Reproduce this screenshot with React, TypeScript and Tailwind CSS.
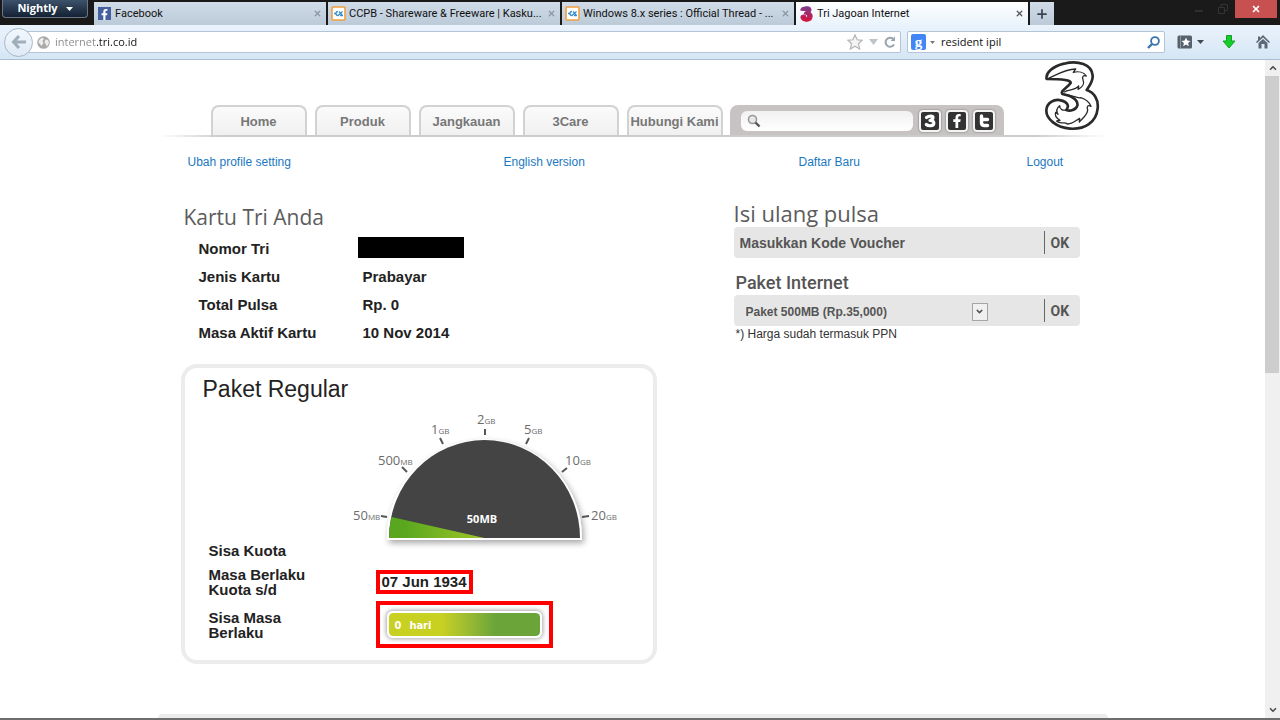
import type { ReactNode } from 'react';
import { FaFacebookF } from 'react-icons/fa';
import { ChevronDown, ChevronUp, Plus, X } from 'lucide-react';

const THREE_OUTLINE =
  'M650 70C646 52 668 32 702 24C744 13 786 26 788 60C789 78 780 88 770 103C792 110 806 132 803 158C799 200 764 222 720 219C680 216 648 190 649 164C650 142 672 129 693 134C712 138 719 151 709 163C720 168 738 163 742 150C745 137 735 123 697 115C690 105 712 97 722 82C724 74 700 70 650 70Z';

const TABS = [
  { title: 'Facebook', icon: <FacebookIcon /> },
  { title: 'CCPB - Shareware & Freeware | Kasku...', icon: <KaskusIcon /> },
  { title: 'Windows 8.x series : Official Thread - ...', icon: <KaskusIcon /> },
  { title: 'Tri Jagoan Internet', icon: <TriIcon />, active: true },
];

const MENU = ['Home', 'Produk', 'Jangkauan', '3Care', 'Hubungi Kami'];

const CARD_ROWS = [
  { label: 'Nomor Tri', value: '' },
  { label: 'Jenis Kartu', value: 'Prabayar' },
  { label: 'Total Pulsa', value: 'Rp. 0' },
  { label: 'Masa Aktif Kartu', value: '10 Nov 2014' },
];

const GAUGE_MARKS = [
  { x: 8, y: 112, value: '50', unit: 'MB', tick: 'M36 108L42 109' },
  { x: 33, y: 57, value: '500', unit: 'MB', tick: 'M57 59L62 64' },
  { x: 86, y: 26, value: '1', unit: 'GB', tick: 'M95 30L98 36' },
  { x: 132, y: 16, value: '2', unit: 'GB', tick: 'M140 21L140 27' },
  { x: 179, y: 26, value: '5', unit: 'GB', tick: 'M184 30L181 36' },
  { x: 220, y: 57, value: '10', unit: 'GB', tick: 'M222 60L217 64' },
  { x: 246, y: 112, value: '20', unit: 'GB', tick: 'M244 108L237 109' },
];

export default function App() {
  return (
    <div className="flex h-screen flex-col overflow-hidden bg-white font-['Liberation_Sans',Arial,sans-serif] text-[#222]">
      <TabStrip />
      <Toolbar />
      <div className="flex min-h-0 flex-1">
        <div className="flex min-w-0 flex-1 flex-col overflow-hidden">
          <div className="mx-auto flex w-full max-w-[950px] flex-1 flex-col">
            <SiteHeader />
            <nav className="mt-4 grid grid-cols-[316px_295px_228px_auto] pl-[30px] text-xs leading-[18px] text-[#1b78c2]">
              <a href="#profile">Ubah profile setting</a>
              <a href="#english">English version</a>
              <a href="#daftar">Daftar Baru</a>
              <a href="#logout">Logout</a>
            </nav>
            <main className="mt-7 grid grid-cols-[476px_346px] items-start gap-[77px] pl-[23px]">
              <div>
                <CardInfo />
                <QuotaPanel />
              </div>
              <TopUp />
            </main>
            <footer className="mt-auto h-1 rounded-t bg-[#ececec]" />
          </div>
        </div>
        <Scrollbar />
      </div>
      <div className="h-0.5 shrink-0 bg-[#6e6e6e]" />
    </div>
  );
}

function TabStrip() {
  return (
    <div className="flex h-[25px] shrink-0 items-start bg-[#1a1a1a] font-['Open_Sans',sans-serif]">
      <button className="ml-0.5 flex h-[18px] w-[86px] items-center justify-center gap-2 rounded-b border border-t-0 border-[#6b7785] bg-linear-to-b from-[#3d526b] to-[#142234] text-[11px] font-bold text-white">
        Nightly
        <Triangle className="h-1 w-[7px] text-white" />
      </button>
      <div className="ml-1.5 flex gap-0.5 self-end">
        {TABS.map((tab) => (
          <div
            key={tab.title}
            className={`flex h-[23px] w-[232px] items-center pr-1 pl-[3px] ${
              tab.active ? 'bg-linear-to-b from-white to-[#eaf3fc]' : 'bg-linear-to-b from-[#d0dce8] to-[#bccad8]'
            }`}
          >
            {tab.icon}
            <button className="ml-[3px] min-w-0 flex-1 text-left font-['Roboto',sans-serif] text-[11px] leading-4 whitespace-nowrap text-[#111]">
              {tab.title}
            </button>
            <button aria-label="Close tab" className={tab.active ? 'text-[#555]' : 'text-[#8c979f]'}>
              <X size={9} strokeWidth={3.5} />
            </button>
          </div>
        ))}
        <button
          aria-label="New tab"
          className="flex h-[23px] w-6 items-center justify-center bg-linear-to-b from-[#d0dce8] to-[#bccad8] text-[#3b4650]"
        >
          <Plus size={14} strokeWidth={3} />
        </button>
      </div>
      <div className="mr-[3px] ml-auto flex h-[18px] items-center text-[#333]">
        <button aria-label="Minimize" className="flex w-6 justify-center">
          <span className="mt-1 h-0.5 w-2 bg-[#2e2e2e]" />
        </button>
        <button aria-label="Restore" className="flex w-6 justify-center">
          <svg width="10" height="10" viewBox="0 0 10 10" fill="none" stroke="#333">
            <path d="M.5 3.5h6v6h-6zM3 3.5V.5h6.500v6H7" />
          </svg>
        </button>
        <button aria-label="Close" className="flex h-[18px] w-[42px] items-center justify-center bg-[#c75050] text-white">
          <X size={10} strokeWidth={4} />
        </button>
      </div>
    </div>
  );
}

function Toolbar() {
  return (
    <div className="flex h-[35px] shrink-0 items-center border-b border-[#a9bdd3] bg-linear-to-b from-[#eaf3fc] to-[#d6e6f5] pr-2.5 pl-1 font-['Open_Sans',sans-serif] text-[11px]">
      <button
        aria-label="Back"
        className="relative z-10 flex size-[29px] items-center justify-center rounded-full border border-[#a8b8c8] bg-linear-to-b from-[#f2f7fc] to-[#dfeaf5]"
      >
        <svg width="16" height="14" viewBox="0 0 16 14" fill="none" stroke="#9faebb" strokeWidth="3">
          <path d="M8 1L2.500 7L8 13M3 7h12" />
        </svg>
      </button>
      <div className="-ml-2 flex h-[22px] flex-1 items-center rounded-xs border border-[#b4c4d4] bg-white pl-[11px]">
        <svg width="13" height="13" viewBox="0 0 13 13">
          <circle cx="6.500" cy="6.500" r="6.300" fill="#a9a9a9" />
          <path d="M2 4L5 1.500L7 3L5.500 5L6.500 7L4.500 10L3 8L1.500 6.500zM8.500 3.500L11 4L12 7L10 10.500L8.500 8L7.500 6z" fill="#ececec" />
        </svg>
        <input
          aria-label="Address"
          defaultValue="internet.tri.co.id"
          className="ml-[5px] min-w-0 flex-1 bg-[linear-gradient(90deg,#8a8a8a_42px,#111_42px)] bg-clip-text text-transparent outline-none"
        />
        <div className="flex items-center gap-1.5 pr-1 text-[#a4adb5]">
          <svg width="16" height="16" viewBox="0 0 16 16" fill="#f4f4f4" stroke="#b4b4b4" strokeWidth="1.200">
            <path d="M8 1L10.200 5.800L15.200 6.300L11.500 9.800L12.600 15L8 12.300L3.400 15L4.500 9.800L.8 6.300L5.800 5.800Z" />
          </svg>
          <Triangle className="h-[6px] w-[9px] text-[#bcc3c9]" />
          <svg width="12" height="12" viewBox="0 0 12 12" fill="none" stroke="#98a4ae" strokeWidth="2">
            <path d="M10 8.500A4.500 4.500 0 1 1 9 2.800" />
            <path d="M11 .5V5H6.500Z" fill="#98a4ae" stroke="none" />
          </svg>
        </div>
      </div>
      <div className="ml-1.5 flex h-[22px] w-[258px] items-center rounded-xs border border-[#b4c4d4] bg-white pr-1 pl-[3px]">
        <span className="flex h-4 w-[15px] items-center justify-center rounded-xs bg-[#4285f4] font-['Liberation_Serif',serif] text-[15px] leading-3 font-bold text-white">
          g
        </span>
        <Triangle className="ml-1 h-[3px] w-[5px] text-[#777]" />
        <input
          aria-label="Search"
          defaultValue="resident ipil"
          className="ml-1.5 min-w-0 flex-1 text-[#111] outline-none"
        />
        <svg width="13" height="13" viewBox="0 0 13 13" fill="none" stroke="#3874b0" strokeWidth="1.800">
          <circle cx="8" cy="5" r="3.900" />
          <path d="M5 8L1 12" strokeWidth="2.400" />
        </svg>
      </div>
      <button aria-label="Bookmarks" className="ml-3 flex items-center gap-1">
        <svg width="16" height="14" viewBox="0 0 16 14">
          <rect x=".5" y=".5" width="14.500" height="13" rx="1.500" fill="#56616d" />
          <path d="M3.500 1v12" stroke="#8b97a3" />
          <path d="M9 2.500L10.300 5.600L13.500 5.900L11.100 8L11.800 11.300L9 9.600L6.200 11.300L6.900 8L4.500 5.900L7.700 5.600Z" fill="#fff" />
        </svg>
        <Triangle className="h-1 w-[7px] text-[#3f4a55]" />
      </button>
      <button aria-label="Downloads" className="ml-[18px]">
        <svg width="14" height="14" viewBox="0 0 14 14" fill="#12cf2a" stroke="#149e24">
          <path d="M4.500 .5h5v5.500h3.500L7 13L1 6h3.500z" />
        </svg>
      </button>
      <button aria-label="Home page" className="ml-5">
        <svg width="14" height="14" viewBox="0 0 14 14" fill="#5c6873">
          <path d="M7 0L14 7L13 8L7 2.500L1 8L0 7L2 5V1.500h2V3z" />
          <path d="M2.500 8L7 4L11.500 8V13.500H8.500V9h-3v4.500h-3z" />
        </svg>
      </button>
    </div>
  );
}

function SiteHeader() {
  return (
    <header className="relative flex h-[77px] items-end pl-[53px]">
      <nav className="flex gap-2">
        {MENU.map((item) => (
          <a
            key={item}
            href="#menu"
            className="flex h-8 w-24 items-center justify-center rounded-t-lg border-2 border-b-0 border-[#d2d2d2] bg-linear-to-b from-[#fbfbfb] to-[#efefef] text-[13px] font-bold whitespace-nowrap text-[#777]"
          >
            {item}
          </a>
        ))}
      </nav>
      <div className="ml-[7px] flex h-8 w-[274px] items-center rounded-t-lg bg-[#c8c3c3] pl-[11px]">
        <label className="flex h-5 w-[172px] items-center rounded-md bg-linear-to-b from-[#f1f1f1] to-white pl-1.5">
          <svg width="14" height="14" viewBox="0 0 14 14" fill="none" stroke="#999" strokeWidth="1.600">
            <circle cx="5.500" cy="5.500" r="4" fill="#e8e8e8" />
            <path d="M8.500 8.500L12.500 12.500" stroke="#555" strokeWidth="2.400" />
          </svg>
          <input aria-label="Cari" className="min-w-0 flex-1 text-xs outline-none" />
        </label>
        <div className="ml-1.5 flex gap-[5px]">
          <SocialLink label="Tri">
            <svg width="12" height="14" viewBox="0 0 12 14" fill="none" stroke="#fff" strokeWidth="3.200" strokeLinecap="round" strokeLinejoin="round">
              <path d="M2.500 3.500C5 1.500 9 1.800 9 3.500C9 5 7.500 6 6 6.500C9 6.500 10 8 9.800 9.500C9.500 12 4.500 12.500 2.300 10.500" />
            </svg>
          </SocialLink>
          <SocialLink label="Facebook">
            <FaFacebookF size={14} />
          </SocialLink>
          <SocialLink label="Twitter">
            <svg width="12" height="14" viewBox="0 0 12 14" fill="none" stroke="#fff" strokeWidth="3.400" strokeLinecap="round">
              <path d="M3.500 2v6.500q0 3 3 3h3M3.500 5.500h6" />
            </svg>
          </SocialLink>
        </div>
      </div>
      <div className="absolute inset-x-0 bottom-0 h-0.5 bg-[linear-gradient(90deg,transparent,#cbcbcb_7%,#cbcbcb_92%,transparent)]" />
      <a href="#tri" aria-label="Tri" className="absolute top-0 right-2">
        <TriLogo />
      </a>
    </header>
  );
}

function CardInfo() {
  return (
    <section>
      <h1 className="pl-[3px] font-['Open_Sans',sans-serif] text-[21px] leading-9 font-medium text-[#5c5c5c]">
        Kartu Tri Anda
      </h1>
      <dl className="pl-[18px] text-[15px] leading-7 font-bold">
        {CARD_ROWS.map((row) => (
          <div key={row.label} className="flex items-start">
            <dt className="w-[159px]">{row.label}</dt>
            {row.value ? (
              <dd className="pl-[5px]">{row.value}</dd>
            ) : (
              <dd className="mt-0.5 h-[21px] w-[106px] bg-black" />
            )}
          </div>
        ))}
      </dl>
    </section>
  );
}

function QuotaPanel() {
  return (
    <section className="mt-[17px] rounded-2xl border-4 border-[#ececec] pt-1 pb-3 pl-6 text-[15px] leading-[15px] font-bold">
      <h2 className="-ml-1.5 text-[23px] leading-[34px] font-normal">Paket Regular</h2>
      <Gauge />
      <p>Sisa Kuota</p>
      <div className="mt-[9px] flex items-center">
        <p className="w-[167px]">
          Masa Berlaku
          <br />
          Kuota s/d
        </p>
        <p className="border-4 border-[#f00] px-0.5 py-px leading-[14px]">07 Jun 1934</p>
      </div>
      <div className="mt-1 flex items-center">
        <p className="w-[167px]">
          Sisa Masa
          <br />
          Berlaku
        </p>
        <div className="border-4 border-[#f00] px-[7px] py-1.5">
          <div className="flex h-[27px] w-[155px] items-center gap-2 rounded-md border-2 border-white bg-linear-to-r from-[#c8d022] from-35% to-[#6ba539] to-70% bg-clip-padding pt-0.5 pl-1.5 font-['DejaVu_Sans_Condensed','DejaVu_Sans',sans-serif] text-[11px] text-white shadow-[0_0_4px_1px_rgba(0,0,0,0.35)]">
            <span>0</span>
            <span>hari</span>
          </div>
        </div>
      </div>
    </section>
  );
}

function Gauge() {
  return (
    <svg
      width="280"
      height="135"
      viewBox="0 0 280 135"
      className="mt-0.5 ml-[136px] overflow-visible font-['Open_Sans',sans-serif] font-normal"
    >
      <defs>
        <linearGradient id="used" x1="0" x2="1">
          <stop offset="0.15" stopColor="#58a71f" />
          <stop offset="1" stopColor="#a0c626" />
        </linearGradient>
        <filter id="soft" x="-10%" y="-10%" width="125%" height="130%">
          <feDropShadow dx="2" dy="3" stdDeviation="3" floodOpacity="0.35" />
        </filter>
      </defs>
      <path d="M42 132V130A97.500 98.500 0 0 1 237 130V132Z" fill="#fff" filter="url(#soft)" />
      <path d="M44 130A95.500 98 0 0 1 235 130Z" fill="#444" />
      <path d="M44 130Q44 119 46.500 109L139.500 130Z" fill="url(#used)" />
      {GAUGE_MARKS.map((mark) => (
        <g key={mark.value + mark.unit}>
          <path d={mark.tick} stroke="#555" strokeWidth="2" />
          <text x={mark.x} y={mark.y} fill="#6c6c6c" fontSize="13">
            {mark.value}
            <tspan fontSize="8">{mark.unit}</tspan>
          </text>
        </g>
      ))}
      <text x="137" y="115" fill="#fff" fontSize="11" fontWeight="700" textAnchor="middle">
        50MB
      </text>
    </svg>
  );
}

function TopUp() {
  return (
    <section className="font-bold text-[#555]">
      <h2 className="font-['Open_Sans',sans-serif] text-[22px] leading-7 font-medium text-[#5c5c5c]">
        Isi ulang pulsa
      </h2>
      <form className="flex h-[31px] items-center rounded bg-[#e6e6e6]" onSubmit={(e) => e.preventDefault()}>
        <input
          aria-label="Kode voucher"
          defaultValue="Masukkan Kode Voucher"
          className="min-w-0 flex-1 pl-1.5 text-sm outline-none"
        />
        <OkButton />
      </form>
      <h3 className="mt-3 pl-0.5 font-['Roboto',sans-serif] text-[18px] leading-[25px] font-medium">Paket Internet</h3>
      <form className="flex h-[31px] items-center rounded bg-[#e6e6e6]" onSubmit={(e) => e.preventDefault()}>
        <div className="relative mt-0.5 ml-3 flex w-[242px]">
          <select aria-label="Paket Internet" className="w-full appearance-none text-xs leading-[18px] outline-none">
            <option>Paket 500MB (Rp.35,000)</option>
          </select>
          <span className="pointer-events-none absolute top-0 right-0 flex h-[18px] w-4 items-center justify-center border border-[#a5a5a5] bg-[#f0f0f0]">
            <ChevronDown size={9} strokeWidth={4} />
          </span>
        </div>
        <span className="flex-1" />
        <OkButton />
      </form>
      <p className="pl-0.5 text-xs leading-4 font-normal text-[#333]">*) Harga sudah termasuk PPN</p>
    </section>
  );
}

function OkButton() {
  return (
    <button className="h-[23px] w-9 shrink-0 border-l border-[#666] pl-1.5 text-left font-['Roboto',sans-serif] text-sm font-bold">
      OK
    </button>
  );
}

function Scrollbar() {
  return (
    <div className="flex w-[15px] shrink-0 flex-col bg-[#f0f0f0] text-[#505050]">
      <button aria-label="Scroll up" className="flex h-4 items-center justify-center">
        <ChevronUp size={10} strokeWidth={4} />
      </button>
      <div className="flex-1 pr-px">
        <div className="h-[47.5%] bg-[#cdcdcd]" />
      </div>
      <button aria-label="Scroll down" className="flex h-4 items-center justify-center">
        <ChevronDown size={10} strokeWidth={4} />
      </button>
    </div>
  );
}

function SocialLink({ label, children }: { label: string; children: ReactNode }) {
  return (
    <a
      href="#social"
      aria-label={label}
      className="flex size-[22px] items-center justify-center rounded border-2 border-[#f4f4f4] bg-[#333] text-white shadow-[0_0_2px_rgba(0,0,0,0.5)]"
    >
      {children}
    </a>
  );
}

function Triangle({ className }: { className: string }) {
  return (
    <svg viewBox="0 0 8 5" preserveAspectRatio="none" className={className}>
      <path d="M0 0h8L4 5z" fill="currentColor" />
    </svg>
  );
}

function TriLogo() {
  return (
    <svg width="56" height="71" viewBox="642 13 168 213" fill="none" stroke="#2a2a2a" strokeWidth="8" strokeLinejoin="round">
      <path d={THREE_OUTLINE} fill="#fff" />
      <path
        strokeWidth="4"
        d="M655 68C682 56 706 41 737 40L730 50C746 46 762 50 769 61C760 58 755 63 759 72C764 84 757 95 744 101L746 91C733 106 716 99 702 110M700 116C728 118 746 129 752 126C766 130 778 140 783 152C774 147 769 152 773 163C773 176 762 184 748 199L749 188C735 196 726 206 712 205C705 196 690 208 680 196L690 194C676 186 674 178 677 170L684 176C677 164 681 156 689 150C689 162 699 165 709 163"
      />
    </svg>
  );
}

function TriIcon() {
  return (
    <svg width="15" height="16" viewBox="638 10 176 220">
      <defs>
        <linearGradient id="tri" x2="0" y2="1">
          <stop stopColor="#7b3a8c" />
          <stop offset="1" stopColor="#d8123c" />
        </linearGradient>
      </defs>
      <path d={THREE_OUTLINE} fill="url(#tri)" stroke="url(#tri)" strokeWidth="14" />
    </svg>
  );
}

function FacebookIcon() {
  return (
    <span className="mx-px flex size-[13px] items-end justify-end bg-[#4560a0] pr-px text-white">
      <FaFacebookF size={11} />
    </span>
  );
}

function KaskusIcon() {
  return (
    <svg width="15" height="15" viewBox="0 0 15 15" fill="none">
      <rect x="1" y="1" width="13" height="13" rx="1" fill="#fff" stroke="#f0a040" strokeWidth="1.600" />
      <path d="M3 7.500h2M7 5.500a2 2 0 1 0 0 4L11.500 5.500M8 5.500L11.500 9.500M9 9.500h3" stroke="#3a8fd0" strokeWidth="1.300" />
    </svg>
  );
}
